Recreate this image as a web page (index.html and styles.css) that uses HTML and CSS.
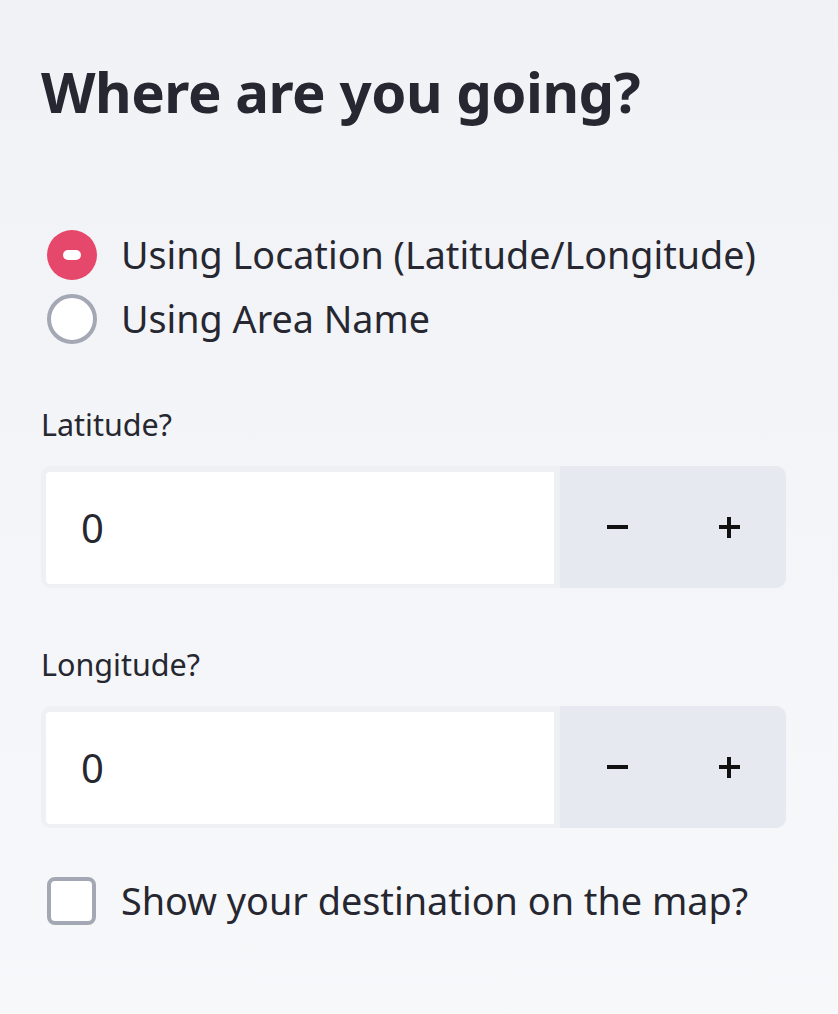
FILE: index.html
```html
<!DOCTYPE html>
<html>
<head>
<meta charset="utf-8">
<link rel="stylesheet" href="styles.css">
</head>
<body>
<div class="sidebar">
  <h1 class="title">Where are you going?</h1>
  <div class="radio-group">
    <div class="radio-row">
      <span class="radio radio-on"><span class="radio-dot"></span></span>
      <span class="opt-text">Using Location (Latitude/Longitude)</span>
    </div>
    <div class="radio-row">
      <span class="radio radio-off"></span>
      <span class="opt-text">Using Area Name</span>
    </div>
  </div>
  <div class="field">
    <div class="label">Latitude?</div>
    <div class="num-input">
      <div class="num-value">0</div>
      <div class="stepper">
        <span class="step"><span class="minus"></span></span>
        <span class="step"><span class="plus"></span></span>
      </div>
    </div>
  </div>
  <div class="field">
    <div class="label">Longitude?</div>
    <div class="num-input">
      <div class="num-value">0</div>
      <div class="stepper">
        <span class="step"><span class="minus"></span></span>
        <span class="step"><span class="plus"></span></span>
      </div>
    </div>
  </div>
  <div class="check-row">
    <span class="checkbox"></span>
    <span class="opt-text check-text">Show your destination on the map?</span>
  </div>
</div>
</body>
</html>
```
FILE: styles.css
```css
html, body {
  margin: 0;
  padding: 0;
}
body {
  width: 838px;
  height: 1014px;
  background: linear-gradient(#f0f2f6, #f7f8fa);
  font-family: "Noto Sans", "Open Sans", sans-serif;
  color: #262730;
  overflow: hidden;
}
.sidebar {
  padding: 52px 52px 0 41px;
}
.title {
  margin: 0;
  font-family: "Noto Sans", sans-serif;
  font-weight: 700;
  font-size: 56.4px;
  line-height: 80px;
  letter-spacing: -0.5px;
}
.radio-group {
  margin-top: 98px;
  display: flex;
  flex-direction: column;
  gap: 14px;
}
.radio-row, .check-row {
  display: flex;
  align-items: center;
  height: 50px;
}
.radio {
  box-sizing: border-box;
  width: 50px;
  height: 50px;
  border-radius: 50%;
  margin-left: 6px;
  margin-right: 24px;
  display: flex;
  align-items: center;
  justify-content: center;
  flex: none;
}
.radio-on {
  background: #e6486b;
}
.radio-dot {
  width: 18px;
  height: 10px;
  border-radius: 5px;
  background: #fff;
}
.radio-off {
  background: #fff;
  border: 4px solid #a3a8b4;
}
.opt-text {
  font-size: 37.7px;
  line-height: 50px;
  white-space: nowrap;
}
.check-text {
  font-size: 37.8px;
}
.label {
  font-size: 30.5px;
  line-height: 40px;
  margin-top: 60px;
  margin-bottom: 22px;
}
.field + .field .label {
  margin-top: 56px;
}
.num-input {
  display: flex;
  width: 745px;
  height: 122px;
  background: #eef0f4;
  border-radius: 10px;
  overflow: hidden;
}
.num-value {
  box-sizing: border-box;
  flex: 1;
  margin: 6px 6px 4px 5px;
  background: #fff;
  border-radius: 4px 0 0 4px;
  font-size: 40px;
  line-height: 112px;
  padding-left: 35px;
}
.stepper {
  display: flex;
  width: 226px;
  background: #e6e9ef;
}
.step {
  flex: 1;
  display: flex;
  align-items: center;
  justify-content: center;
  position: relative;
}
.minus {
  width: 21px;
  height: 4px;
  background: #111;
  margin-left: 1px;
}
.plus {
  position: relative;
  width: 21px;
  height: 21px;
  margin-right: 1px;
}
.plus::before, .plus::after {
  content: "";
  position: absolute;
  background: #111;
}
.plus::before {
  left: 0;
  top: 8.5px;
  width: 21px;
  height: 4px;
}
.plus::after {
  top: 0;
  left: 8.5px;
  width: 4px;
  height: 21px;
}
.check-row {
  margin-top: 48px;
}
.checkbox {
  box-sizing: border-box;
  width: 49px;
  height: 48px;
  border: 4px solid #a3a8b4;
  border-radius: 8px;
  background: #fff;
  margin-left: 6px;
  margin-right: 25px;
  flex: none;
}
```
